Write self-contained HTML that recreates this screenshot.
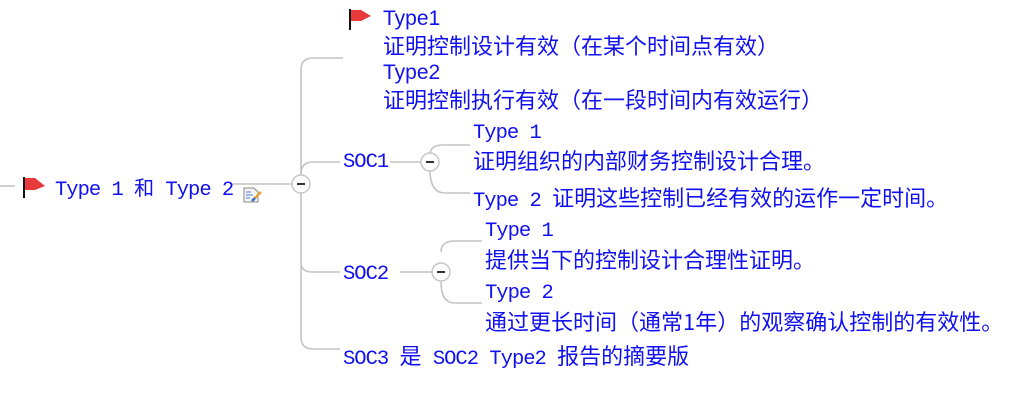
<!DOCTYPE html>
<html><head><meta charset="utf-8"><style>
body{margin:0;width:1029px;height:403px;background:#fff;overflow:hidden;position:relative}
.t{position:absolute;white-space:nowrap;color:#1010f0;line-height:26px;font-size:22px;font-family:"Noto Sans CJK SC","WenQuanYi Zen Hei",sans-serif}
.m{font-family:"Liberation Mono",monospace;font-size:20.5px;letter-spacing:-1px}
.s{font-family:"Liberation Sans",sans-serif;font-size:21px}
svg{position:absolute;left:0;top:0}
</style></head><body>
<svg width="1029" height="403" fill="none" stroke="#c4c4c4" stroke-width="1.6">
<path d="M0 186H15"/>
<path d="M232 184H292"/>
<path d="M343 58H313Q301 58 301 70V175"/>
<path d="M301 193V337Q301 349 313 349H340"/>
<path d="M301 174Q301 162 313 162H340"/>
<path d="M301 263Q301 272 313 272H340"/>
<path d="M390 162H421"/>
<path d="M470 145H443Q430 145 430 155"/>
<path d="M430 170Q430 193 445 193H470"/>
<path d="M400 272H432"/>
<path d="M482 241H455Q441 241 441 252"/>
<path d="M441 282Q441 303 455 303H482"/>
<g fill="#fff" stroke="#c4c4c4" stroke-width="1.4">
<circle cx="301" cy="184" r="9"/><circle cx="430" cy="162" r="9"/><circle cx="441" cy="272" r="9"/>
</g>
<g stroke="#333" stroke-width="2"><path d="M297 184H305M426 162H434M437 272H445"/></g>
<g stroke="none">
<rect x="23" y="177" width="2" height="21" fill="#111"/>
<path d="M25 178H35L45 186L35 190H25Z" fill="#e83a3a"/>
<rect x="349" y="9" width="2" height="21" fill="#111"/>
<path d="M351 10H361L371 16L361 21H351Z" fill="#e83a3a"/>
<path d="M244 188H254L258 192V202H244Z" fill="#f4f4f4" stroke="#888" stroke-width="1"/>
<path d="M246 192H251M246 195H253M246 198H250" stroke="#4a7fd0" stroke-width="1"/>
<path d="M252 201L261 192" stroke="#e8a030" stroke-width="2.5"/>
<path d="M252 201L255 198" stroke="#3a6fd0" stroke-width="2.5"/>
</g>
</svg>
<div class="t m" style="left:55px;top:174px">Type 1 <span style="font-family:'Noto Sans CJK SC',sans-serif;font-size:20px;letter-spacing:0">和</span> Type 2</div>
<div class="t s" style="left:383px;top:6px">Type1</div>
<div class="t" style="left:383px;top:32px">证明控制设计有效（在某个时间点有效）</div>
<div class="t s" style="left:383px;top:60px">Type2</div>
<div class="t" style="left:383px;top:86px">证明控制执行有效（在一段时间内有效运行）</div>
<div class="t m" style="left:343px;top:150px">SOC1</div>
<div class="t m" style="left:473px;top:121px">Type 1</div>
<div class="t" style="left:473px;top:147px">证明组织的内部财务控制设计合理。</div>
<div class="t" style="left:473px;top:184px"><span class="m">Type 2 </span>证明这些控制已经有效的运作一定时间。</div>
<div class="t m" style="left:343px;top:262px">SOC2</div>
<div class="t m" style="left:485px;top:219px">Type 1</div>
<div class="t" style="left:485px;top:246px">提供当下的控制设计合理性证明。</div>
<div class="t m" style="left:485px;top:281px">Type 2</div>
<div class="t" style="left:485px;top:308px">通过更长时间（通常1年）的观察确认控制的有效性。</div>
<div class="t" style="left:343px;top:342px"><span class="m">SOC3 </span>是<span class="m"> SOC2 Type2 </span>报告的摘要版</div>
</body></html>
